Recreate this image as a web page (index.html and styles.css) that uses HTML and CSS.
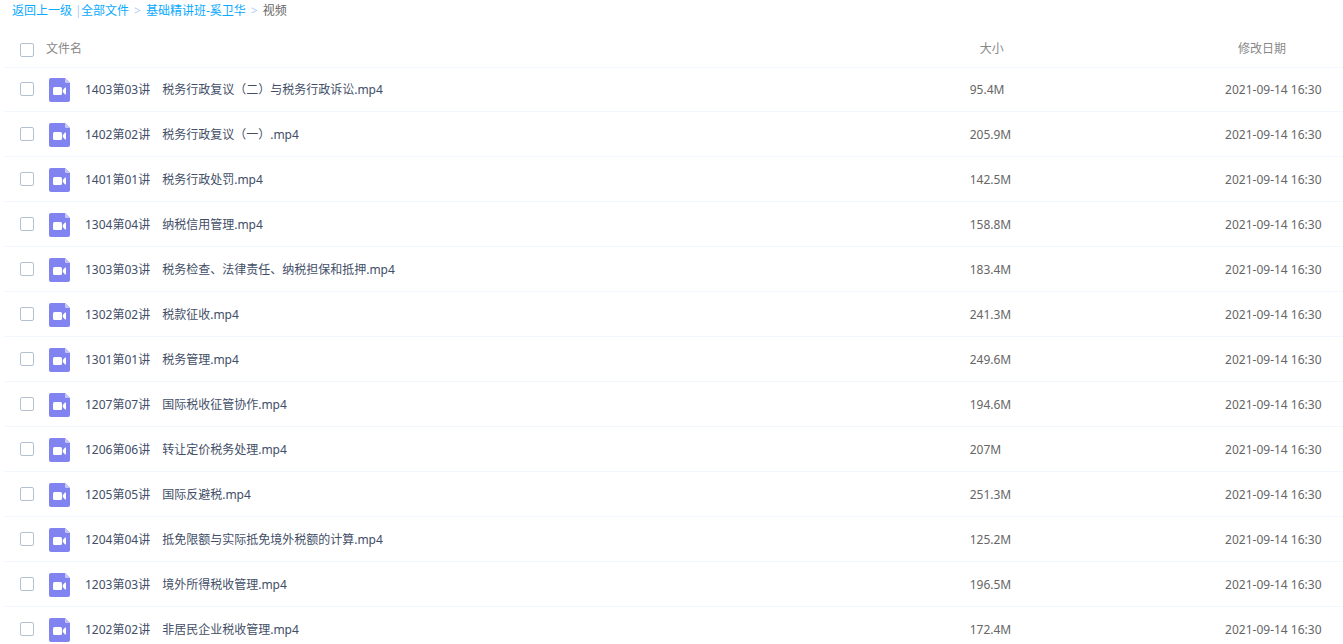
FILE: index.html
```html
<!DOCTYPE html>
<html lang="zh-CN">
<head>
    <meta charset="UTF-8">
    <meta name="viewport" content="width=device-width, initial-scale=1.0">
    <title>视频</title>
    <link rel="stylesheet" href="styles.css">
</head>
<body>
    <nav class="crumbs">
        <a href="#">返回上一级</a>
        <span class="bar">|</span>
        <a href="#">全部文件</a>
        <span class="arrow">&gt;</span>
        <a href="#">基础精讲班-奚卫华</a>
        <span class="arrow">&gt;</span>
        <span>视频</span>
    </nav>

    <table class="files">
        <thead>
            <tr>
                <th class="col-name"><label class="file"><input type="checkbox" class="check" id="check-all">文件名</label></th>
                <th class="col-size">大小</th>
                <th class="col-date">修改日期</th>
            </tr>
        </thead>
        <tbody id="file-list"></tbody>
    </table>

    <script src="files.js"></script>
</body>
</html>
```

FILE: styles.css
```css
body {
    margin: 0;
    height: 100vh;
    overflow: hidden;
    background: #fff;
    color: #666;
    font-family: "Noto Sans", "Noto Sans CJK SC", sans-serif;
    font-size: 12px;
    line-height: 20px;
}

/* 面包屑 */
.crumbs {
    display: flex;
    gap: 5px;
    padding: 1px 12px 0;
}

.crumbs a {
    color: #09aaff;
    text-decoration: none;
}

.crumbs a:hover {
    text-decoration: underline;
}

.crumbs .bar,
.crumbs .arrow {
    color: #b0cdf8;
}

.crumbs .bar {
    width: 3px;
    margin: 0 -2px;
}

/* 文件列表 */
.files {
    width: calc(100% - 4px);
    margin: 9px 0 0 4px;
    border-collapse: separate;
    border-spacing: 0;
    table-layout: fixed;
}

.files th,
.files td {
    box-sizing: border-box;
    height: 45px;
    padding: 1px 0 0 15px;
    border-bottom: 1px solid #f2f6fd;
    text-align: left;
    white-space: nowrap;
}

.files th {
    height: 38px;
    padding-top: 0;
    color: #888;
    font-weight: normal;
}

.files tbody tr:first-child td {
    height: 44px;
}

.files tbody tr:hover {
    background: #f4fbff;
}

.files .col-name {
    width: 71%;
}

.files .col-size {
    width: 19%;
    padding-left: 25px;
}

.files .col-date {
    width: 10%;
    padding-left: 29px;
}

.files td:last-child {
    padding-left: 16px;
}

.file {
    display: flex;
    align-items: center;
    color: #424e67;
}

th .file {
    color: #888;
}

.check {
    appearance: none;
    box-sizing: border-box;
    width: 14px;
    height: 14px;
    margin: 0 12px 2px 1px;
    border: 1px solid #b3c2d1;
    border-radius: 2px;
    background: #fff;
}

th .check {
    margin-top: 2px;
    margin-bottom: 0;
}

.check:checked {
    border-color: #09aaff;
    background: #09aaff;
}

.icon {
    width: 21px;
    height: 24px;
    margin: 0 15px 0 3px;
}
```

FILE: files.js
```js
const files = [
    ['1403第03讲　税务行政复议（二）与税务行政诉讼.mp4', '95.4M'],
    ['1402第02讲　税务行政复议（一）.mp4', '205.9M'],
    ['1401第01讲　税务行政处罚.mp4', '142.5M'],
    ['1304第04讲　纳税信用管理.mp4', '158.8M'],
    ['1303第03讲　税务检查、法律责任、纳税担保和抵押.mp4', '183.4M'],
    ['1302第02讲　税款征收.mp4', '241.3M'],
    ['1301第01讲　税务管理.mp4', '249.6M'],
    ['1207第07讲　国际税收征管协作.mp4', '194.6M'],
    ['1206第06讲　转让定价税务处理.mp4', '207M'],
    ['1205第05讲　国际反避税.mp4', '251.3M'],
    ['1204第04讲　抵免限额与实际抵免境外税额的计算.mp4', '125.2M'],
    ['1203第03讲　境外所得税收管理.mp4', '196.5M'],
    ['1202第02讲　非居民企业税收管理.mp4', '172.4M']
];

// 视频文件图标
const icon = `
    <svg class="icon" viewBox="0 0 21 24" aria-hidden="true">
        <path fill="#8183f1" d="M2 0h14l5 5v17a2 2 0 0 1-2 2H2a2 2 0 0 1-2-2V2a2 2 0 0 1 2-2z"/>
        <path fill="#c5c6fa" d="M16 0l5 5h-4a1 1 0 0 1-1-1z"/>
        <rect fill="#fff" x="4" y="9" width="9" height="8" rx="1.5"/>
        <path fill="#fff" d="M13.8 12l2.2-2.4q1-.6 1 .5v5.8q0 1.100-1 .5L13.800 14z"/>
    </svg>`;

const list = document.getElementById('file-list');

files.forEach(([name, size]) => {
    const tr = document.createElement('tr');
    tr.innerHTML = `
        <td><label class="file"><input type="checkbox" class="check">${icon}<span>${name}</span></label></td>
        <td>${size}</td>
        <td>2021-09-14 16:30</td>`;
    list.appendChild(tr);
});

// 全选
document.getElementById('check-all').addEventListener('change', (event) => {
    list.querySelectorAll('.check').forEach(box => {
        box.checked = event.target.checked;
    });
});
```
